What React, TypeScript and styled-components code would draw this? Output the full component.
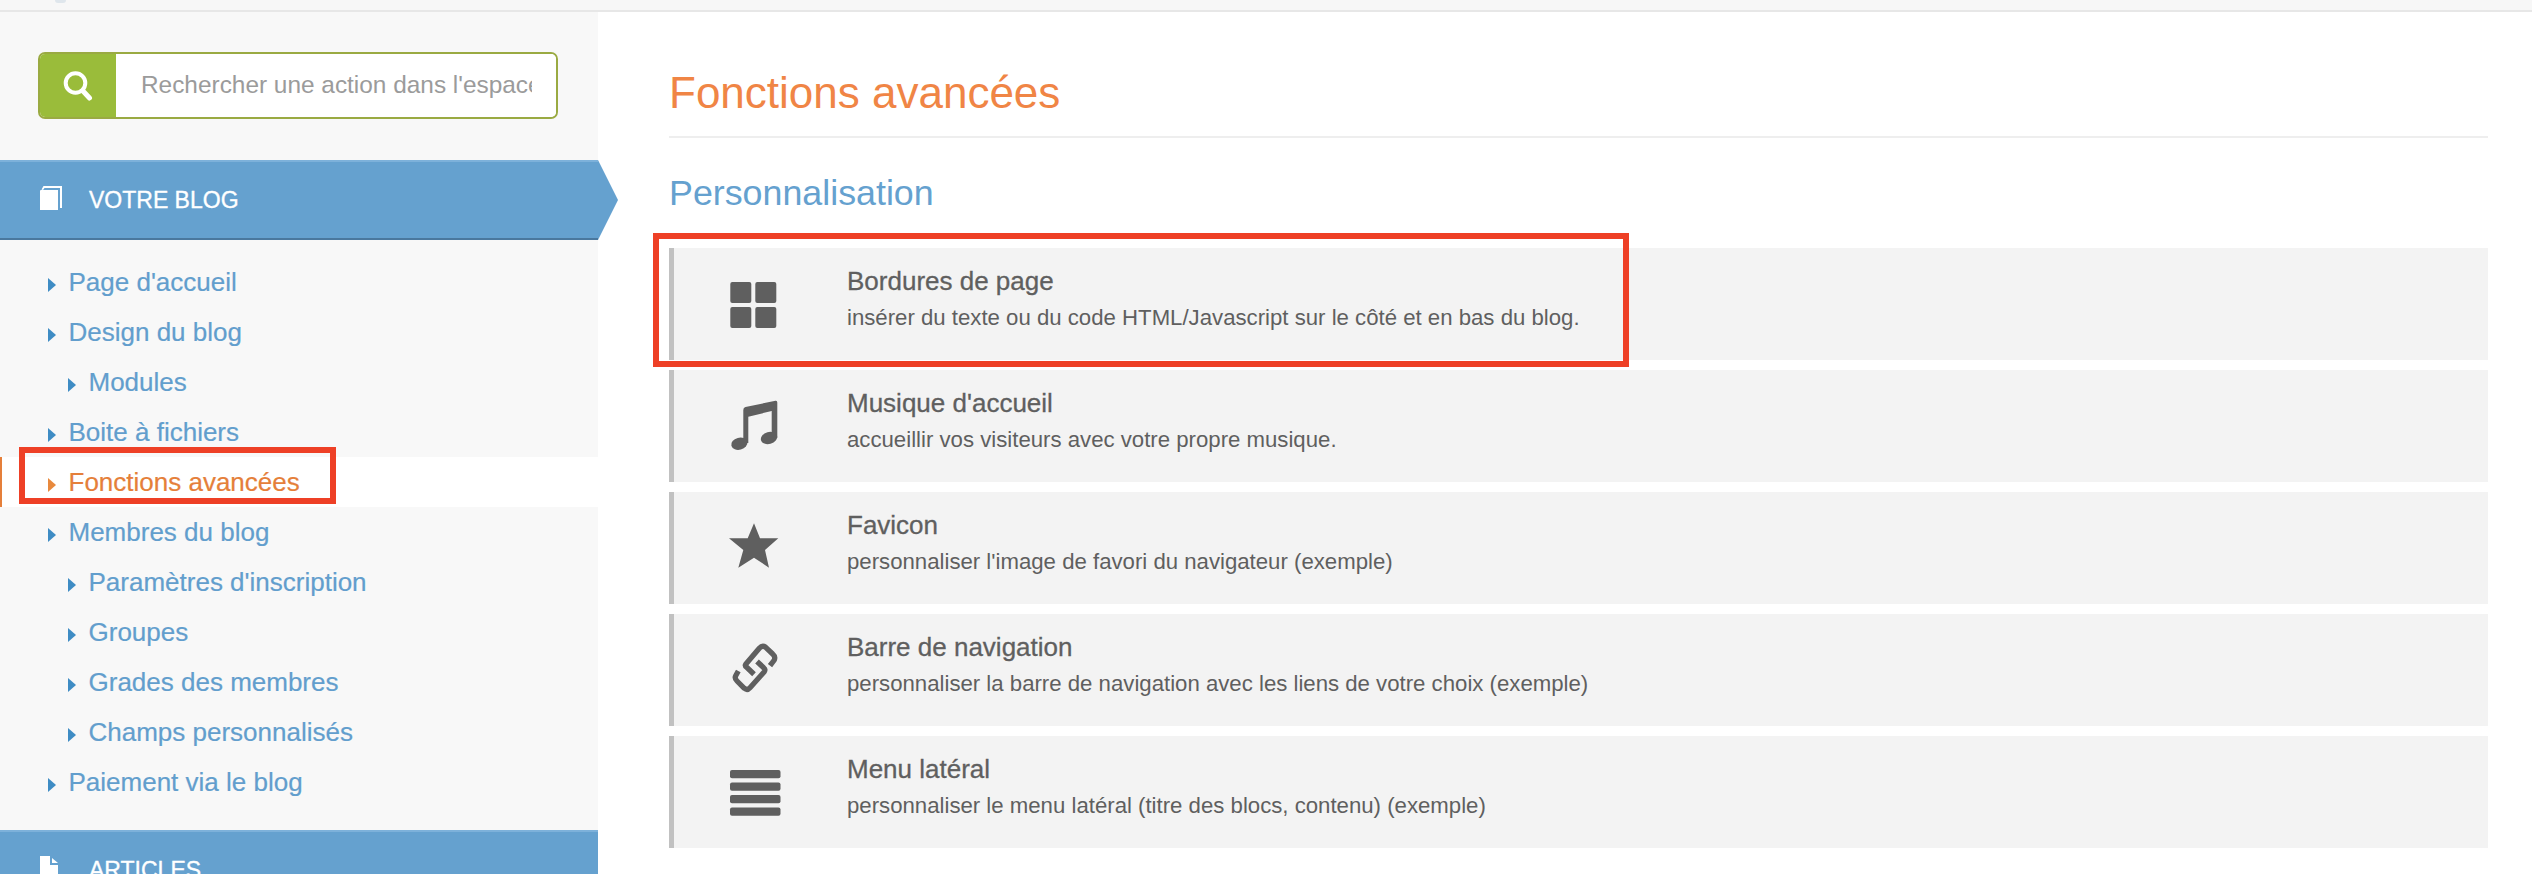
import React from "react";
import styled, { createGlobalStyle } from "styled-components";

const Global = createGlobalStyle`
  html, body { margin: 0; padding: 0; background: #fff; }
  body { font-family: "Liberation Sans", Arial, sans-serif; }
  * { box-sizing: border-box; }
`;

const Page = styled.div`
  width: 2532px;
  height: 874px;
  overflow: hidden;
  display: flex;
  flex-direction: column;
`;

const TopBar = styled.div`
  flex: 0 0 12px;
  background: #f7f7f7;
  border-bottom: 2px solid #e7e7e7;
  padding-left: 55px;
`;

const TopBarMark = styled.div`
  width: 11px;
  height: 3px;
  background: #dfe6ec;
  border-radius: 0 0 5px 5px;
`;

const Body = styled.div`
  flex: 1;
  display: flex;
  min-height: 0;
`;

const Sidebar = styled.aside`
  flex: 0 0 598px;
  background: #f8f8f8;
  display: flex;
  flex-direction: column;
  padding-top: 40px;
`;

const SearchBox = styled.div`
  flex: 0 0 67px;
  width: 520px;
  margin: 0 0 41px 38px;
  display: flex;
  border: 2px solid #9aaa42;
  border-radius: 7px;
  overflow: hidden;
  background: #fff;
`;

const SearchButton = styled.div`
  flex: 0 0 76px;
  background: #9abc3a;
  display: flex;
  align-items: center;
  justify-content: center;
`;

const SearchInput = styled.input`
  flex: 1;
  min-width: 0;
  border: 0;
  outline: 0;
  background: #fff;
  padding: 0 24px 2px 25px;
  font: 24.4px "Liberation Sans", Arial, sans-serif;
  &::placeholder { color: #9b9b9b; opacity: 1; }
`;

const SectionHeader = styled.div<{ $arrow?: boolean }>`
  position: relative;
  flex: 0 0 80px;
  display: flex;
  align-items: center;
  background: #65a1cf;
  border-top: 2px solid #7db1da;
  border-bottom: 2px solid #4a789e;
  padding-left: 40px;
  color: #fff;
  font-size: 23px;
  -webkit-text-stroke: 0.35px #fff;
  ${(p) =>
    p.$arrow
      ? `&::after {
          content: "";
          position: absolute;
          left: 100%;
          top: -2px;
          border-left: 20px solid #65a1cf;
          border-top: 40px solid transparent;
          border-bottom: 40px solid transparent;
        }`
      : ""}
`;

const HeaderIcon = styled.span`
  flex: 0 0 49px;
  display: flex;
  align-items: center;
  margin-bottom: 4px;
`;

const NavList = styled.ul`
  list-style: none;
  margin: 0;
  padding: 17px 0 23px;
`;

const NavItem = styled.li<{ $sub?: boolean; $active?: boolean }>`
  position: relative;
  height: 50px;
  line-height: 50px;
  font-size: 26px;
  -webkit-text-stroke: 0.2px ${(p) => (p.$active ? "#e57f3a" : "#629ecd")};
  padding-left: ${(p) => (p.$sub ? 88.5 : 68.5)}px;
  color: ${(p) => (p.$active ? "#e57f3a" : "#629ecd")};
  background: ${(p) => (p.$active ? "#fff" : "transparent")};
  border-left: ${(p) => (p.$active ? "2px solid #e57f3a" : "0")};
  text-indent: ${(p) => (p.$active ? "-2px" : "0")};
  &::before {
    content: "";
    position: absolute;
    left: ${(p) => (p.$sub ? 68 : p.$active ? 46 : 48)}px;
    top: 21px;
    border-left: 8px solid ${(p) => (p.$active ? "#e8893d" : "#3f8cc4")};
    border-top: 7px solid transparent;
    border-bottom: 7px solid transparent;
  }
`;

const NavHighlight = styled.span`
  position: absolute;
  left: 17px;
  top: -10px;
  width: 317px;
  height: 57px;
  border: 6px solid #ee4026;
`;

const Main = styled.main`
  flex: 1;
  min-width: 0;
  padding: 53px 44px 0 71px;
`;

const Title = styled.h1`
  margin: 0;
  font-size: 44px;
  font-weight: normal;
  line-height: 56px;
  color: #f08545;
  padding-bottom: 15px;
  border-bottom: 2px solid #eeeeee;
`;

const SubTitle = styled.h2`
  margin: 33px 0;
  font-size: 35.8px;
  font-weight: normal;
  line-height: 44px;
  color: #65a1cf;
`;

const Rows = styled.div`
  display: flex;
  flex-direction: column;
  gap: 10px;
`;

const Row = styled.div`
  position: relative;
  height: 112px;
  display: flex;
  background: #f3f3f3;
  border-left: 5px solid #c1c1c1;
`;

const RowHighlight = styled.span`
  position: absolute;
  left: -21px;
  top: -15px;
  width: 976px;
  height: 134px;
  border: 6px solid #ee4026;
`;

const RowIcon = styled.div`
  flex: 0 0 158px;
  margin-right: 15px;
  display: flex;
  align-items: center;
  justify-content: center;
`;

const RowText = styled.div`
  padding-top: 17px;
  color: #5f5f5f;
`;

const RowTitle = styled.div`
  font-size: 26px;
  line-height: 32px;
  -webkit-text-stroke: 0.3px #5f5f5f;
`;

const RowDesc = styled.div`
  margin-top: 6px;
  font-size: 22.2px;
  line-height: 30px;
`;

const Icon60 = ({ children }: { children: React.ReactNode }) => (
  <svg width="60" height="60" viewBox="0 0 60 60" fill="#5f5f5f" style={{ overflow: "visible" }}>
    {children}
  </svg>
);

const GridIcon = () => (
  <Icon60>
    <rect x="7.3" y="8" width="21" height="21" rx="2" />
    <rect x="32.3" y="8" width="21" height="21" rx="2" />
    <rect x="7.3" y="33" width="21" height="21" rx="2" />
    <rect x="32.3" y="33" width="21" height="21" rx="2" />
  </Icon60>
);

const MusicIcon = () => (
  <Icon60>
    <path d="M20.3 47V14Q20.3 11.6 22.5 11L52.5 4.8Q54.3 4.5 54.3 6.5V42H48.7V15L25.3 20.7V47Z" />
    <ellipse cx="16.3" cy="47.7" rx="8.2" ry="6" transform="rotate(-15 16.3 47.7)" />
    <ellipse cx="46" cy="42" rx="8.3" ry="6" transform="rotate(-15 46 42)" />
  </Icon60>
);

const StarIcon = () => (
  <Icon60>
    <path d="M31 5.3L37 20.3H55.3L42 32L46 49.7L31 39.7L15.3 49.7L20.3 32L6 20.3H24.7Z" />
  </Icon60>
);

const LinkIcon = () => (
  <Icon60>
    <g fill="none" stroke="#5f5f5f" strokeWidth="5.3" strokeLinejoin="round">
      <path d="M47 25.7L51.3 20Q52.7 16.7 49.7 14L42.7 7.3Q39.3 5 36.3 8.3L22.7 24.3Q21.7 26 23.7 27.3L31 34.2" />
      <path d="M15.3 31L12.7 35.7Q11.3 38.3 14 41L21.3 48.3Q24.3 50.7 27 47.7L41.3 31.7Q42.7 29.3 40.7 27.7L34 21.5" />
    </g>
  </Icon60>
);

const MenuIcon = () => (
  <Icon60>
    <rect x="7" y="8" width="50.5" height="8.3" rx="2" />
    <rect x="7" y="20.5" width="50.5" height="8.3" rx="2" />
    <rect x="7" y="33" width="50.5" height="8.3" rx="2" />
    <rect x="7" y="45.5" width="50.5" height="8.3" rx="2" />
  </Icon60>
);

const SearchGlyph = () => (
  <svg width="30" height="30" viewBox="0 0 30 30" fill="none" stroke="#fff">
    <circle cx="12.5" cy="12" r="9.8" strokeWidth="4" />
    <path d="M20 20L26.5 27" strokeWidth="5" strokeLinecap="round" />
  </svg>
);

const BookGlyph = () => (
  <svg width="22" height="24" viewBox="0 0 22 24" fill="#fff">
    <path d="M0 5Q0 4 1 4H18V24H0Z" />
    <path d="M1.5 3.5L3.5 0H22V22H20V2H4.5L3 4Z" />
  </svg>
);

const DocGlyph = () => (
  <svg width="18" height="24" viewBox="0 0 18 24" fill="#fff">
    <path d="M0 0H10V9H18V24H0Z" />
    <path d="M12 2L18 7H12Z" />
  </svg>
);

const navItems: { label: string; sub?: boolean; active?: boolean }[] = [
  { label: "Page d'accueil" },
  { label: "Design du blog" },
  { label: "Modules", sub: true },
  { label: "Boite à fichiers" },
  { label: "Fonctions avancées", active: true },
  { label: "Membres du blog" },
  { label: "Paramètres d'inscription", sub: true },
  { label: "Groupes", sub: true },
  { label: "Grades des membres", sub: true },
  { label: "Champs personnalisés", sub: true },
  { label: "Paiement via le blog" },
];

const rows = [
  { icon: <GridIcon />, title: "Bordures de page", desc: "insérer du texte ou du code HTML/Javascript sur le côté et en bas du blog.", marked: true },
  { icon: <MusicIcon />, title: "Musique d'accueil", desc: "accueillir vos visiteurs avec votre propre musique." },
  { icon: <StarIcon />, title: "Favicon", desc: "personnaliser l'image de favori du navigateur (exemple)" },
  { icon: <LinkIcon />, title: "Barre de navigation", desc: "personnaliser la barre de navigation avec les liens de votre choix (exemple)" },
  { icon: <MenuIcon />, title: "Menu latéral", desc: "personnaliser le menu latéral (titre des blocs, contenu) (exemple)" },
];

export default function App() {
  return (
    <Page>
      <Global />
      <TopBar>
        <TopBarMark />
      </TopBar>
      <Body>
        <Sidebar>
          <SearchBox>
            <SearchButton>
              <SearchGlyph />
            </SearchButton>
            <SearchInput placeholder="Rechercher une action dans l'espace" />
          </SearchBox>
          <SectionHeader $arrow>
            <HeaderIcon>
              <BookGlyph />
            </HeaderIcon>
            VOTRE BLOG
          </SectionHeader>
          <NavList>
            {navItems.map((n) => (
              <NavItem key={n.label} $sub={n.sub} $active={n.active}>
                {n.label}
                {n.active && <NavHighlight />}
              </NavItem>
            ))}
          </NavList>
          <SectionHeader>
            <HeaderIcon>
              <DocGlyph />
            </HeaderIcon>
            ARTICLES
          </SectionHeader>
        </Sidebar>
        <Main>
          <Title>Fonctions avancées</Title>
          <SubTitle>Personnalisation</SubTitle>
          <Rows>
            {rows.map((r) => (
              <Row key={r.title}>
                <RowIcon>{r.icon}</RowIcon>
                <RowText>
                  <RowTitle>{r.title}</RowTitle>
                  <RowDesc>{r.desc}</RowDesc>
                </RowText>
                {r.marked && <RowHighlight />}
              </Row>
            ))}
          </Rows>
        </Main>
      </Body>
    </Page>
  );
}
